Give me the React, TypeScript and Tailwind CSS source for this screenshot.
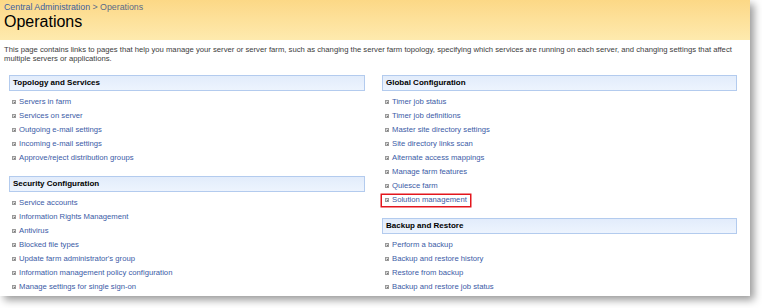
import React from "react";

type Item = { label: string; highlight?: boolean };
type Section = { title: string; items: Item[] };

const LEFT: Section[] = [
  {
    title: "Topology and Services",
    items: [
      { label: "Servers in farm" },
      { label: "Services on server" },
      { label: "Outgoing e-mail settings" },
      { label: "Incoming e-mail settings" },
      { label: "Approve/reject distribution groups" },
    ],
  },
  {
    title: "Security Configuration",
    items: [
      { label: "Service accounts" },
      { label: "Information Rights Management" },
      { label: "Antivirus" },
      { label: "Blocked file types" },
      { label: "Update farm administrator's group" },
      { label: "Information management policy configuration" },
      { label: "Manage settings for single sign-on" },
    ],
  },
];

const RIGHT: Section[] = [
  {
    title: "Global Configuration",
    items: [
      { label: "Timer job status" },
      { label: "Timer job definitions" },
      { label: "Master site directory settings" },
      { label: "Site directory links scan" },
      { label: "Alternate access mappings" },
      { label: "Manage farm features" },
      { label: "Quiesce farm" },
      { label: "Solution management", highlight: true },
    ],
  },
  {
    title: "Backup and Restore",
    items: [
      { label: "Perform a backup" },
      { label: "Backup and restore history" },
      { label: "Restore from backup" },
      { label: "Backup and restore job status" },
    ],
  },
];

function Bullet() {
  return (
    <span className="flex h-[4px] w-[4px] shrink-0 items-center justify-center border border-[#9a9a9a] bg-[#d8d8d8]">
      <span className="h-[1px] w-[1px] bg-[#777]" />
    </span>
  );
}

function SectionBlock({ section }: { section: Section }) {
  return (
    <div className="flex flex-col mb-[11px]">
      <div className="flex h-[16px] items-center border border-[#b3cbee] bg-gradient-to-b from-[#e2ecfb] to-[#edf4fe] pl-[3px] text-[8px] font-bold text-black">
        {section.title}
      </div>
      <div className="mt-[4px] flex flex-col">
        {section.items.map((item) => (
          <div key={item.label} className="flex h-[14px] items-center">
            <span
              className={
                "flex h-[11px] items-center gap-[3px] pl-[3px] pr-[3px] " +
                (item.highlight ? "ring-[1.5px] ring-[#e3161d]" : "")
              }
            >
              <Bullet />
              <span className="text-[7.7px] leading-none text-[#3b5ba6]">{item.label}</span>
            </span>
          </div>
        ))}
      </div>
    </div>
  );
}

export default function App() {
  return (
    <div
      className="h-[308px] w-[762px] overflow-hidden bg-white"
      style={{ fontFamily: '"Liberation Sans", Arial, sans-serif' }}
    >
      <div className="flex h-[296px] w-[750px] flex-col overflow-hidden bg-white shadow-[4px_4px_8px_rgba(0,0,0,0.4)]">
        <div className="flex h-[40px] shrink-0 flex-col bg-gradient-to-b from-[#fcd886] to-[#feeaae] px-[4px] pt-[2px]">
          <div className="text-[8.8px] leading-[10px]">
            <span className="text-[#3d5e9e]">Central Administration</span>
            <span className="text-[#5a6a86]"> &gt; Operations</span>
          </div>
          <div className="text-[16px] leading-[20px] text-black">Operations</div>
        </div>

        <p className="mt-[5px] px-[4px] pr-[14px] text-[7.7px] leading-[9px] text-[#3c3c3c]">
          This page contains links to pages that help you manage your server or server farm, such as changing
          the server farm topology, specifying which services are running on each server, and changing settings
          that affect multiple servers or applications.
        </p>

        <div className="mt-[12px] grid grid-cols-[356px_355px] gap-x-[17px] pl-[9px]">
          <div className="flex flex-col">
            {LEFT.map((s) => (
              <SectionBlock key={s.title} section={s} />
            ))}
          </div>
          <div className="flex flex-col">
            {RIGHT.map((s) => (
              <SectionBlock key={s.title} section={s} />
            ))}
          </div>
        </div>
      </div>
    </div>
  );
}
